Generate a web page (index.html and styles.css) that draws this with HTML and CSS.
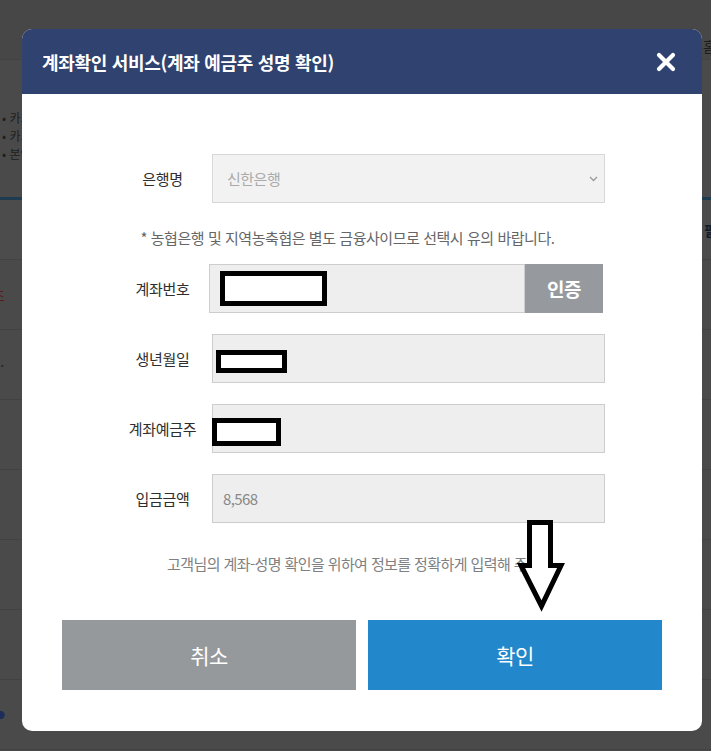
FILE: index.html
```html
<!DOCTYPE html>
<html lang="ko">
<head>
    <meta charset="UTF-8">
    <meta name="viewport" content="width=device-width, initial-scale=1.0">
    <title>계좌확인 서비스</title>
    <link rel="stylesheet" href="styles.css">
</head>
<body>
    <!-- page behind the dimmed overlay -->
    <div class="page">
        <div class="page-top"><span class="crumb">홈</span></div>
        <ul class="page-notes">
            <li>카드 결제 후 취소 시 환불</li>
            <li>카드 명세서 상호 확인</li>
            <li>본인 명의 계좌만 등록</li>
        </ul>
        <div class="page-bar"></div>
        <div class="page-table">
            <div class="page-row page-head"><span></span><span class="right-txt">필</span></div>
            <div class="page-row"><span class="red-txt">조</span><span></span></div>
            <div class="page-row"><span class="dot-txt">·</span><span></span></div>
            <div class="page-row"><span></span><span></span></div>
            <div class="page-row"><span></span><span></span></div>
            <div class="page-row"><span></span><span></span></div>
            <div class="page-row"><span></span><span></span></div>
            <div class="page-row"><span class="blue-txt">●</span><span></span></div>
        </div>
    </div>

    <div class="overlay">
        <div class="modal">
            <div class="modal-head">
                <h2>계좌확인 서비스(계좌 예금주 성명 확인)</h2>
                <button class="close" type="button" aria-label="닫기">
                    <svg width="20" height="20" viewBox="0 0 20 20"><path d="M3 3 L17 17 M17 3 L3 17" stroke="#fff" stroke-width="4.2" stroke-linecap="round"/></svg>
                </button>
            </div>

            <div class="modal-body">
                <div class="form">
                    <div class="row">
                        <label>은행명</label>
                        <div class="select">
                            <span>신한은행</span>
                            <svg width="9" height="6" viewBox="0 0 9 6"><path d="M1 1 L4.5 4.5 L8 1" stroke="#9a9a9a" stroke-width="1.3" fill="none"/></svg>
                        </div>
                    </div>
                    <p class="note">* 농협은행 및 지역농축협은 별도 금융사이므로 선택시 유의 바랍니다.</p>
                    <div class="row">
                        <label>계좌번호</label>
                        <div class="acct">
                            <div class="field"><span class="mask mask-acct"></span></div>
                            <button class="auth" type="button">인증</button>
                        </div>
                    </div>
                    <div class="row gap">
                        <label>생년월일</label>
                        <div class="field"><span class="mask mask-birth"></span></div>
                    </div>
                    <div class="row gap">
                        <label>계좌예금주</label>
                        <div class="field"><span class="mask mask-owner"></span></div>
                    </div>
                    <div class="row gap">
                        <label>입금금액</label>
                        <div class="field"><span class="value">8,568</span></div>
                    </div>
                </div>

                <p class="hint">고객님의 계좌-성명 확인을 위하여 정보를 정확하게 입력해 주세요.</p>

                <div class="actions">
                    <button class="btn btn-cancel" type="button">취소</button>
                    <button class="btn btn-ok" type="button">확인</button>
                </div>
            </div>

            <svg class="arrow" width="54" height="98" viewBox="0 0 54 98">
                <polygon points="15.5,6.5 36.5,6.5 36.5,49.5 47,49.5 27.5,90 7,49.5 15.5,49.5" fill="#fff" stroke="#000" stroke-width="5" stroke-linejoin="miter"/>
            </svg>
        </div>
    </div>
</body>
</html>
```

FILE: styles.css
```css
body {
    margin: 0;
    background: #4a4a4a;
    font-family: "Noto Sans CJK KR", "Noto Sans", sans-serif;
    color: #333;
    width: 711px;
    height: 751px;
    overflow: hidden;
}

/* dimmed page underneath */
.page {
    width: 711px;
}
.page-top {
    height: 60px;
    box-sizing: border-box;
    background: #474747;
    border-bottom: 1px solid #424242;
    padding: 33px 0 0 703px;
    white-space: nowrap;
    overflow: hidden;
}
.crumb {
    font-size: 14px;
    color: #1c1c1c;
}
.page-notes {
    list-style: none;
    margin: 49px 0 0 0;
    padding: 0 0 0 2px;
    font-size: 12px;
    line-height: 18px;
    color: #1e1e1e;
    white-space: nowrap;
}
.page-notes li::before {
    content: "• ";
}
.page-bar {
    height: 3px;
    margin-top: 34px;
    background: #1d3c50;
}
.page-row {
    height: 70px;
    border-bottom: 1px solid #424242;
    display: flex;
    justify-content: space-between;
    align-items: center;
    box-sizing: border-box;
}
.page-head {
    height: 60px;
    background: #4c4c4c;
}
.right-txt {
    font-size: 14px;
    font-weight: bold;
    color: #141c2c;
    margin-right: -6px;
}
.red-txt {
    font-size: 14px;
    color: #5a1d1d;
    margin-left: -8px;
}
.dot-txt {
    color: #2a2a2a;
}
.blue-txt {
    font-size: 9px;
    color: #1e2c5c;
    margin-left: -4px;
}

/* modal */
.overlay {
    position: fixed;
    inset: 0;
    padding: 29px 0 0 22px;
}
.modal {
    position: relative;
    width: 680px;
    background: #fff;
    border-radius: 10px;
    overflow: hidden;
}
.modal-head {
    height: 65px;
    background: #2f4270;
    display: flex;
    align-items: center;
    justify-content: space-between;
    padding: 0 26px 0 20px;
}
.modal-head h2 {
    margin: 0;
    color: #fff;
    font-size: 18px;
    font-weight: bold;
    letter-spacing: -0.3px;
}
.close {
    background: none;
    border: none;
    padding: 0;
    width: 20px;
    height: 20px;
    display: flex;
}

.modal-body {
    padding: 60px 0 41px;
}
.form {
    margin-left: 68px;
    width: 515px;
}
.row {
    display: grid;
    grid-template-columns: 122px 393px;
    align-items: center;
}
.row.gap {
    margin-top: 21px;
}
.row label {
    padding: 0 12px 0 35px;
    text-align: center;
    font-size: 15px;
    letter-spacing: -0.3px;
    color: #2e2e2e;
}
.select {
    height: 49px;
    box-sizing: border-box;
    background: #f2f2f2;
    border: 1px solid #d8d8d8;
    display: flex;
    align-items: center;
    justify-content: space-between;
    padding: 0 6px 0 14px;
    font-size: 15px;
    color: #aaa;
    letter-spacing: -0.5px;
}
.note {
    margin: 24px 0 16px;
    line-height: 21px;
    text-align: center;
    font-size: 15px;
    color: #666;
    letter-spacing: -0.45px;
}
.field {
    height: 49px;
    box-sizing: border-box;
    background: #eee;
    border: 1px solid #cdcdcd;
    display: flex;
    align-items: center;
}
.acct {
    display: flex;
    width: 394px;
    margin-left: -3px;
}
.acct .field {
    flex: 1;
}
.auth {
    width: 78px;
    height: 49px;
    border: none;
    background: #969a9e;
    color: #fff;
    font-family: inherit;
    font-size: 19px;
    font-weight: bold;
    letter-spacing: -0.5px;
}
.value {
    padding-left: 10px;
    font-size: 15px;
    color: #888;
    letter-spacing: -0.6px;
}
.mask {
    display: block;
    box-sizing: border-box;
    border: 5px solid #000;
    background: #fff;
}
.mask-acct {
    width: 107px;
    height: 35px;
    margin-left: 10px;
}
.mask-birth {
    width: 71px;
    height: 23px;
    margin: 5px 0 0 3px;
}
.mask-owner {
    width: 69px;
    height: 28px;
    margin: 7px 0 0 -1px;
}

.hint {
    margin: 31px 0 46px;
    line-height: 20px;
    text-align: center;
    font-size: 15px;
    color: #808080;
    letter-spacing: -0.6px;
}
.actions {
    display: flex;
    gap: 12px;
    padding: 0 40px;
}
.btn {
    flex: 1;
    height: 70px;
    border: none;
    color: #fff;
    font-family: inherit;
    font-size: 21px;
    letter-spacing: -0.5px;
}
.btn-cancel {
    background: #95999c;
}
.btn-ok {
    background: #2287cb;
}

/* hand-drawn arrow on top of the form */
.arrow {
    position: absolute;
    left: 492px;
    top: 487px;
}
```
